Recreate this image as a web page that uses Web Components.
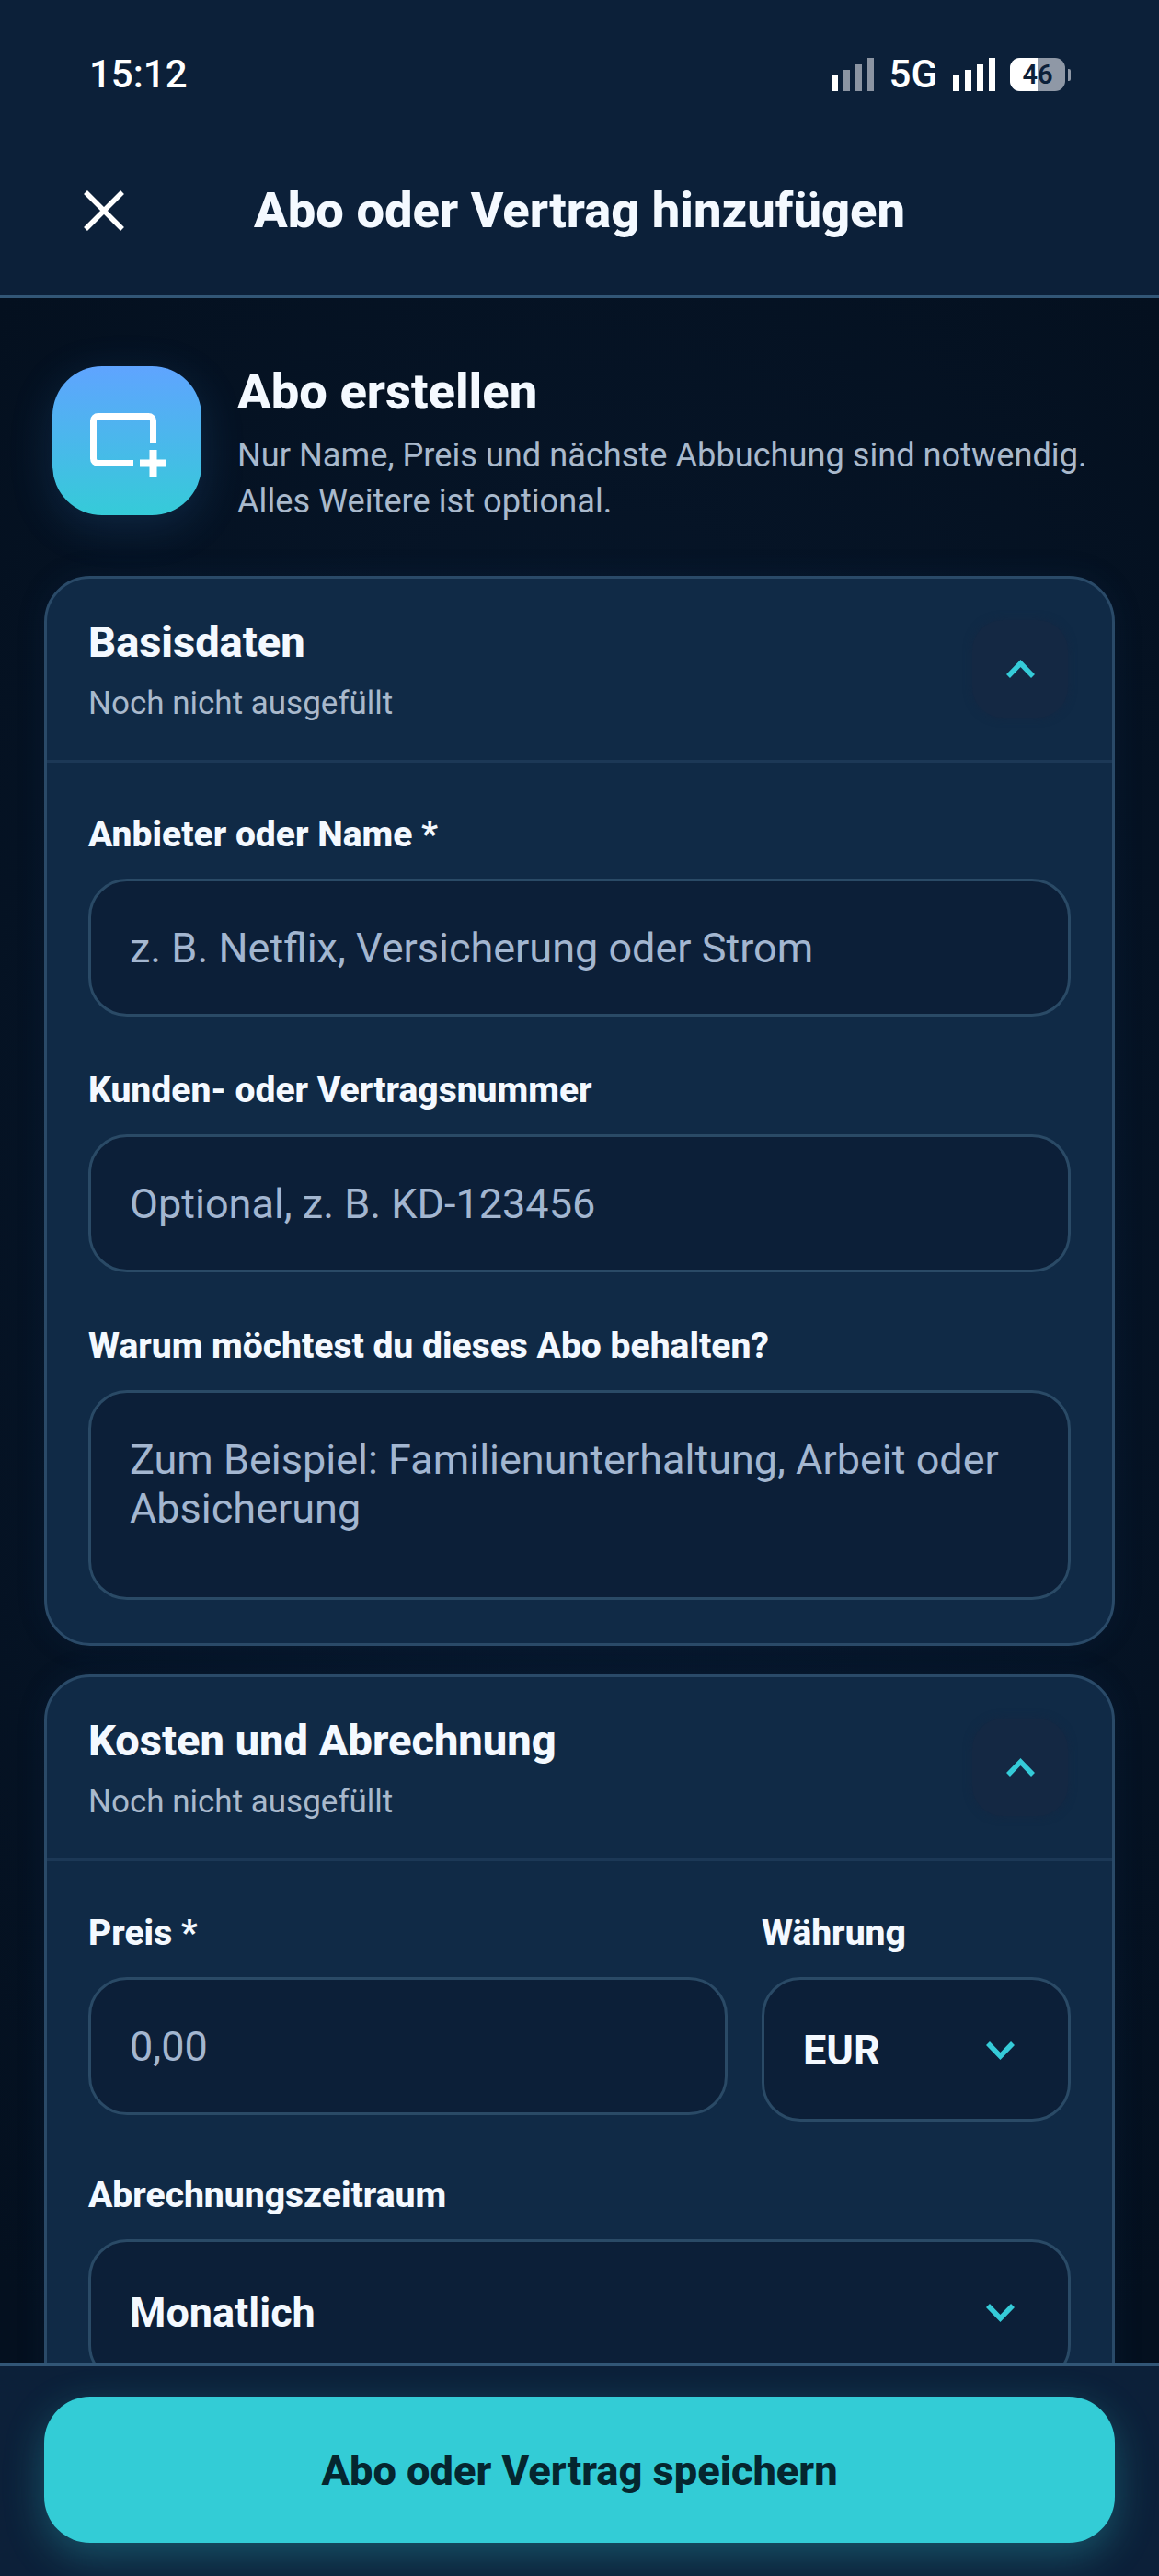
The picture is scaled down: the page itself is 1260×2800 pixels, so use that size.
<!DOCTYPE html>
<html lang="de"><head><meta charset="utf-8"><title>Abo</title>
<style>
html,body{margin:0;padding:0;background:#04101f}
body{font-family:Roboto,"Liberation Sans",sans-serif;color:#f4f9ff}
</style></head><body>
<app-screen>
  <status-bar slot="top"></status-bar>
  <app-header slot="top">Abo oder Vertrag hinzufügen</app-header>
  <intro-block title="Abo erstellen">Nur Name, Preis und nächste Abbuchung sind notwendig.<br>Alles Weitere ist optional.</intro-block>
  <section-card heading="Basisdaten" sub="Noch nicht ausgefüllt">
    <form-field label="Anbieter oder Name *"><text-box placeholder="z. B. Netflix, Versicherung oder Strom"></text-box></form-field>
    <form-field label="Kunden- oder Vertragsnummer"><text-box placeholder="Optional, z. B. KD-123456"></text-box></form-field>
    <form-field label="Warum möchtest du dieses Abo behalten?"><text-box multiline placeholder="Zum Beispiel: Familienunterhaltung, Arbeit oder Absicherung"></text-box></form-field>
  </section-card>
  <section-card heading="Kosten und Abrechnung" sub="Noch nicht ausgefüllt">
    <field-row>
      <form-field label="Preis *"><text-box placeholder="0,00"></text-box></form-field>
      <form-field label="Währung"><select-box value="EUR"></select-box></form-field>
    </field-row>
    <form-field label="Abrechnungszeitraum"><select-box value="Monatlich"></select-box></form-field>
  </section-card>
  <save-bar slot="bottom">Abo oder Vertrag speichern</save-bar>
</app-screen>
<script>
function def(name, css, html){
  customElements.define(name, class extends HTMLElement{
    connectedCallback(){
      if(this.shadowRoot) return;
      const r=this.attachShadow({mode:'open'});
      const get=a=>this.getAttribute(a)||'';
      r.innerHTML='<style>'+css+'</style>'+(typeof html==='function'?html(get,this):html);
    }
  });
}
def('app-screen',`
:host{display:flex;flex-direction:column;width:1260px;height:2800px;overflow:hidden;position:relative;
 background:radial-gradient(ellipse 900px 1500px at 50% 50%,#08192f 0%,#04101f 100%)}
.top{flex:none;background:#0c2039;border-bottom:3px solid #325676}
.main{flex:1;min-height:0;overflow:hidden;padding:74px 48px 0;display:flex;flex-direction:column;gap:31px}
.bottom{flex:none;position:relative}
`,`<div class="top"><slot name="top"></slot></div><div class="main"><slot></slot></div><div class="bottom"><slot name="bottom"></slot></div>`);
def('status-bar',`
:host{display:flex;justify-content:space-between;align-items:center;height:70px;padding:46px 96px 0 97px;font:500 42px/70px Roboto,sans-serif;color:#fff}
.r{display:flex;align-items:center}
.g{font-size:42px;font-weight:500;margin:0 17px 0 17px}
svg{display:block}
.bat{position:relative;width:60px;height:36px;border-radius:11px;background:#8f98a6;overflow:hidden;color:#0c2039;font:600 29px/36px Roboto,sans-serif;text-align:center;margin-left:16px}
.bat i{position:absolute;left:0;top:0;bottom:0;width:30px;background:#fff}
.bat span{position:relative}
.wrap{display:flex;align-items:center;gap:3px}
.nub{width:3px;height:13px;background:#8f98a6;border-radius:0 2px 2px 0}
`,`<span>15:12</span><div class="r">
<svg width="46" height="36" viewBox="0 0 46 36"><rect x="0" y="19" width="7" height="17" fill="#fff"/><rect x="13" y="13" width="7" height="23" fill="#8b94a2"/><rect x="26" y="7" width="7" height="29" fill="#8b94a2"/><rect x="39" y="0" width="7" height="36" fill="#8b94a2"/></svg>
<span class="g">5G</span>
<svg width="46" height="36" viewBox="0 0 46 36"><rect x="0" y="19" width="7" height="17" fill="#fff"/><rect x="13" y="13" width="7" height="23" fill="#fff"/><rect x="26" y="7" width="7" height="29" fill="#fff"/><rect x="39" y="0" width="7" height="36" fill="#fff"/></svg>
<div class="wrap"><div class="bat"><i></i><span>46</span></div><div class="nub"></div></div>
</div>`);
def('app-header',`
:host{display:flex;align-items:center;height:205px;box-sizing:border-box;padding:20px 0 0 0}
button{all:unset;flex:none;width:44px;height:44px;margin-left:91px;display:block}
svg{display:block}
h1{margin:0 0 0 141px;font:800 54.3px/64px Roboto,sans-serif;color:#f4f9ff;white-space:nowrap}
`,`<button aria-label="Schließen"><svg width="44" height="44" viewBox="0 0 44 44" fill="none" stroke="#fff" stroke-width="5.5"><path d="M2 2 42 42M42 2 2 42"/></svg></button><h1><slot></slot></h1>`);
def('intro-block',`
:host{display:flex;gap:39px;padding-left:9px;align-items:flex-start;flex:none;margin-bottom:25px}
.tile{flex:none;width:162px;height:162px;border-radius:54px;background:linear-gradient(180deg,#5fa4ff,#35cbd8);box-shadow:0 12px 48px rgba(60,140,220,.18);display:flex;align-items:center;justify-content:center}
.tile svg{display:block;margin:9px 0 0 3px}
.t{font:800 54.3px/64px Roboto,sans-serif;color:#f4f9ff;margin-top:-4px}
.d{font:400 36.2px/50px Roboto,sans-serif;color:#a9b9cc;margin-top:12px;white-space:nowrap}
`,(g)=>`<div class="tile"><svg width="83" height="69" viewBox="0 0 83 69" fill="none" stroke="#fff"><path d="M47 54.5H8.5a5 5 0 0 1-5-5V8.5a5 5 0 0 1 5-5H63.5a5 5 0 0 1 5 5V33" stroke-width="7"/><path d="M68.5 40V69M54 54.5H83" stroke-width="8"/></svg></div><div><div class="t">${g('title')}</div><div class="d"><slot></slot></div></div>`);
def('section-card',`
:host{display:block;flex:none;border:3px solid #2a4a68;border-radius:50px;background:#102a46;overflow:hidden;box-shadow:0 0 30px rgba(20,50,90,.2)}
.h{display:flex;justify-content:space-between;height:200px;box-sizing:border-box;border-bottom:3px solid #1c3856;padding:0 45px}
.ht{font:800 47px/52px Roboto,sans-serif;color:#f4f9ff;padding-top:43px}
.s{font:400 35px/42px Roboto,sans-serif;color:#a9b9cc;margin-top:20px}
.chev{width:104px;height:106px;margin-top:45px;margin-right:3px;border-radius:33px;background:#142843;box-shadow:0 0 10px #142843;display:flex;align-items:center;justify-content:center}
.chev svg{display:block}
.b{padding:55px 45px 47px;display:flex;flex-direction:column;gap:57px}
`,(g)=>`<div class="h"><div><div class="ht">${g('heading')}</div><div class="s">${g('sub')}</div></div><div class="chev"><svg width="31" height="20" viewBox="0 0 31 20" fill="none" stroke="#35cbd8" stroke-width="5.5"><path d="M2 18 15.5 4 29 18"/></svg></div></div><div class="b"><slot></slot></div>`);
def('field-row',`:host{display:grid;grid-template-columns:695px 336px;gap:37px;align-items:start}`,`<slot></slot>`);
def('form-field',`
:host{display:block}
label{display:block;font:800 39px/46px Roboto,sans-serif;color:#f4f9ff;margin-bottom:25px;white-space:nowrap}
`,(g)=>`<label>${g('label')}</label><slot></slot>`);
def('text-box',`
:host{display:block;box-sizing:border-box;border:3px solid #2a4a66;border-radius:42px;background:#0c1f38;height:150px;padding:47px 42px 0;font:400 45px/52px Roboto,sans-serif;color:#a3b6d0}
:host([multiline]){height:228px;padding-top:46px;line-height:53px}
`,(g)=>`<div>${g('placeholder')}</div>`);
def('select-box',`
:host{display:flex;align-items:center;justify-content:space-between;box-sizing:border-box;border:3px solid #2a4a66;border-radius:42px;background:#0c1f38;height:157px;padding:0 58px 0 42px;font:700 45px/52px Roboto,sans-serif;color:#f4f9ff}
span{padding-top:2px}
svg{flex:none;margin-top:2px}
`,(g)=>`<span>${g('value')}</span><svg width="31" height="20" viewBox="0 0 31 20" fill="none" stroke="#35cbd8" stroke-width="5.5"><path d="M2 2 15.5 16 29 2"/></svg>`);
def('save-bar',`
:host{display:block;background:#0c2039;border-top:3px solid #325676;padding:33px 48px 36px;height:231px;box-sizing:border-box}
button{all:unset;display:flex;align-items:center;justify-content:center;width:100%;height:159px;border-radius:50px;background:#33ccd6;color:#05262f;font:800 45.2px/54px Roboto,sans-serif;box-shadow:0 14px 44px rgba(51,204,214,.3);padding-top:2px;box-sizing:border-box}
`,`<button><slot></slot></button>`);
</script>
</body></html>
